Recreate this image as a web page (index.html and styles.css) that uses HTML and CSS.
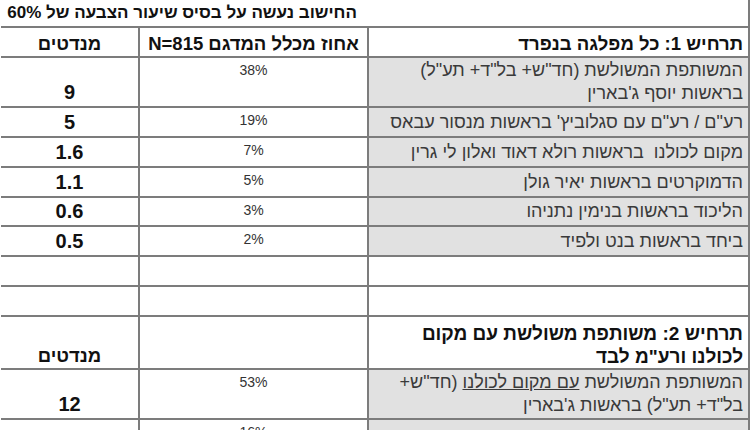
FILE: index.html
```html
<!DOCTYPE html>
<html lang="he" dir="rtl">
<head>
<meta charset="utf-8">
<title>תרחישים</title>
<link rel="stylesheet" href="styles.css">
</head>
<body>
<div class="sheet">
  <div class="cell title"><span>החישוב נעשה על בסיס שיעור הצבעה של 60%</span></div>

  <div class="cell head party-head"><span>תרחיש 1: כל מפלגה בנפרד</span></div>
  <div class="cell head center"><span>אחוז מכלל המדגם N=815</span></div>
  <div class="cell head center"><span>מנדטים</span></div>

  <div class="cell party"><span>המשותפת המשולשת (חד"ש+ בל"ד+ תע"ל)<br>בראשות יוסף ג'בארין</span></div>
  <div class="cell pct"><span>38%</span></div>
  <div class="cell seats"><span>9</span></div>

  <div class="cell party"><span>רע"ם / רע"ם עם סגלוביץ' בראשות מנסור עבאס</span></div>
  <div class="cell pct"><span>19%</span></div>
  <div class="cell seats"><span>5</span></div>

  <div class="cell party"><span>מקום לכולנו&nbsp; בראשות רולא דאוד ואלון לי גרין</span></div>
  <div class="cell pct"><span>7%</span></div>
  <div class="cell seats"><span>1.6</span></div>

  <div class="cell party"><span>הדמוקרטים בראשות יאיר גולן</span></div>
  <div class="cell pct"><span>5%</span></div>
  <div class="cell seats"><span>1.1</span></div>

  <div class="cell party"><span>הליכוד בראשות בנימין נתניהו</span></div>
  <div class="cell pct"><span>3%</span></div>
  <div class="cell seats"><span>0.6</span></div>

  <div class="cell party"><span>ביחד בראשות בנט ולפיד</span></div>
  <div class="cell pct"><span>2%</span></div>
  <div class="cell seats"><span>0.5</span></div>

  <div class="cell"></div><div class="cell"></div><div class="cell"></div>
  <div class="cell"></div><div class="cell"></div><div class="cell"></div>

  <div class="cell head section"><span>תרחיש 2: משותפת משולשת עם מקום<br>לכולנו ורע"מ לבד</span></div>
  <div class="cell"></div>
  <div class="cell head center"><span>מנדטים</span></div>

  <div class="cell party"><span>המשותפת המשולשת <u>עם מקום לכולנו</u> (חד"ש+<br>בל"ד+ תע"ל) בראשות ג'בארין</span></div>
  <div class="cell pct"><span>53%</span></div>
  <div class="cell seats"><span>12</span></div>

  <div class="cell party"><span>רע"ם / רע"ם עם סגלוביץ' בראשות מנסור עבאס</span></div>
  <div class="cell pct"><span>16%</span></div>
  <div class="cell seats"><span>4</span></div>
</div>
</body>
</html>
```

FILE: styles.css
```css
html, body {
  margin: 0;
  padding: 0;
  background: #ffffff;
  overflow: hidden;
}

body {
  width: 750px;
  height: 430px;
  font-family: "Liberation Sans", "DejaVu Sans", sans-serif;
  color: #111;
}

.sheet {
  direction: rtl;
  width: 747px;
  padding-right: 2px;
  display: grid;
  grid-template-columns: 379px 227px 137px;
  grid-template-rows: 26px 28px 48px 28px 28px 28px 27px 28px 28px 28px 51px 48px 40px;
  gap: 2px;
  background: #7c7c7c;
}

.cell {
  background: #ffffff;
  display: flex;
  align-items: center;
  overflow: hidden;
  white-space: nowrap;
}

.title {
  grid-column: 1 / 4;
  font-weight: bold;
  font-size: 17px;
  padding-right: 391px;
}

.head {
  font-weight: bold;
  font-size: 18.5px;
  align-items: flex-end;
  padding-bottom: 1px;
}

.party-head {
  padding-right: 5px;
}

.center {
  justify-content: center;
}

.section {
  padding-right: 5px;
  font-size: 19px;
  line-height: 23px;
  padding-bottom: 0;
}

.party {
  background: #e1e1e1;
  color: #3a3a3a;
  font-size: 18px;
  line-height: 23px;
  padding-right: 5px;
}

.pct {
  justify-content: center;
  align-items: flex-start;
  font-size: 14px;
  color: #333;
  padding-top: 4px;
}

.seats {
  justify-content: center;
  align-items: flex-end;
  font-weight: bold;
  font-size: 20px;
  padding-bottom: 2px;
}
```
